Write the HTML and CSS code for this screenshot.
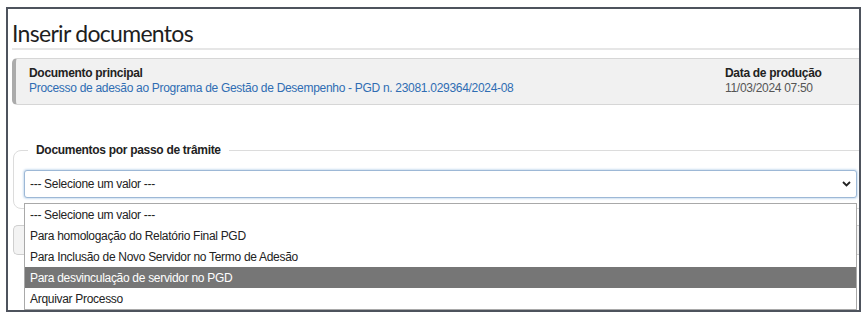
FILE: index.html
```html
<!DOCTYPE html>
<html lang="pt-BR">
<head>
<meta charset="utf-8">
<title>Inserir documentos</title>
<link rel="stylesheet" href="styles.css">
</head>
<body>
<div class="frame">
  <h1 class="title">Inserir documentos</h1>
  <div class="doc-box">
    <div class="doc-main">
      <div class="label">Documento principal</div>
      <a class="doc-link" href="#">Processo de adesão ao Programa de Gestão de Desempenho - PGD n. 23081.029364/2024-08</a>
    </div>
    <div class="doc-date">
      <div class="label">Data de produção</div>
      <div class="date">11/03/2024 07:50</div>
    </div>
  </div>
  <fieldset class="steps">
    <legend>Documentos por passo de trâmite</legend>
    <div class="select-wrap">
      <div class="select">
        <span>--- Selecione um valor ---</span>
        <svg class="chev" width="9" height="6" viewBox="0 0 9 6"><path d="M1 1l3.5 3.5L8 1" fill="none" stroke="#222" stroke-width="1.8"/></svg>
      </div>
      <ul class="options">
        <li>--- Selecione um valor ---</li>
        <li>Para homologação do Relatório Final PGD</li>
        <li>Para Inclusão de Novo Servidor no Termo de Adesão</li>
        <li class="active">Para desvinculação de servidor no PGD</li>
        <li>Arquivar Processo</li>
      </ul>
    </div>
  </fieldset>
  <div class="behind"></div>
</div>
</body>
</html>
```

FILE: styles.css
```css
html, body {
  margin: 0;
  padding: 0;
  background: #fff;
}
body {
  font-family: "Liberation Sans", Arial, sans-serif;
  font-size: 12px;
  letter-spacing: -0.3px;
  color: #222;
}
.frame {
  box-sizing: border-box;
  margin: 7px 0 0 6px;
  width: 855px;
  height: 305px;
  border: 2px solid #4e535d;
  padding: 0 0 0 4px;
  overflow: hidden;
  background: #fff;
  position: relative;
}
.title {
  margin: 0;
  padding-top: 9px;
  font-family: "Lato", "Open Sans", sans-serif;
  font-weight: 400;
  font-size: 23px;
  line-height: 30px;
  color: #1e1e1e;
  border-bottom: 2px solid #e6e6e6;
  letter-spacing: -0.7px;
}
.doc-box {
  display: flex;
  margin-top: 8px;
  margin-right: -14px;
  height: 47px;
  box-sizing: border-box;
  background: #f1f1f1;
  border: 1px solid #d6d6d6;
  border-left: 4px solid #ababab;
  border-radius: 5px;
  padding: 7px 0 0 13px;
}
.doc-main {
  flex: 1;
}
.doc-date {
  width: 147px;
}
.label {
  font-weight: bold;
  line-height: 15px;
  color: #222;
}
.doc-link {
  display: block;
  color: #2f6db3;
  text-decoration: none;
  line-height: 15px;
}
.date {
  color: #555;
  line-height: 15px;
}
.steps {
  margin: 38px -12px 0 1px;
  padding: 13px 13px 10px 10px;
  border: 1px solid #dcdcdc;
  border-radius: 8px;
  min-width: 0;
}
.steps legend {
  margin-left: 4px;
  padding: 0 8px;
  font-weight: bold;
  line-height: 14px;
  color: #222;
}
.select-wrap {
  position: relative;
}
.select {
  box-sizing: border-box;
  height: 28px;
  display: flex;
  align-items: center;
  justify-content: space-between;
  padding: 0 5px 0 5px;
  border: 1px solid #9db8d6;
  border-radius: 3px;
  box-shadow: 0 0 2px 1px #cfe0f1;
  background: #fff;
  color: #222;
}
.options {
  position: absolute;
  left: 0;
  right: 0;
  top: 33px;
  margin: 0;
  padding: 0;
  list-style: none;
  background: #fff;
  border: 1px solid #a9a9a9;
  z-index: 2;
}
.options li {
  height: 21px;
  line-height: 22px;
  padding-left: 5px;
  color: #222;
}
.options li.active {
  background: #767676;
  color: #fff;
}
.behind {
  margin: 16px -12px 0 1px;
  height: 28px;
  border: 1px solid #cfcfcf;
  border-right: 3px solid #9fb3c8;
  border-radius: 5px;
  background: #f3f3f3;
}
```
